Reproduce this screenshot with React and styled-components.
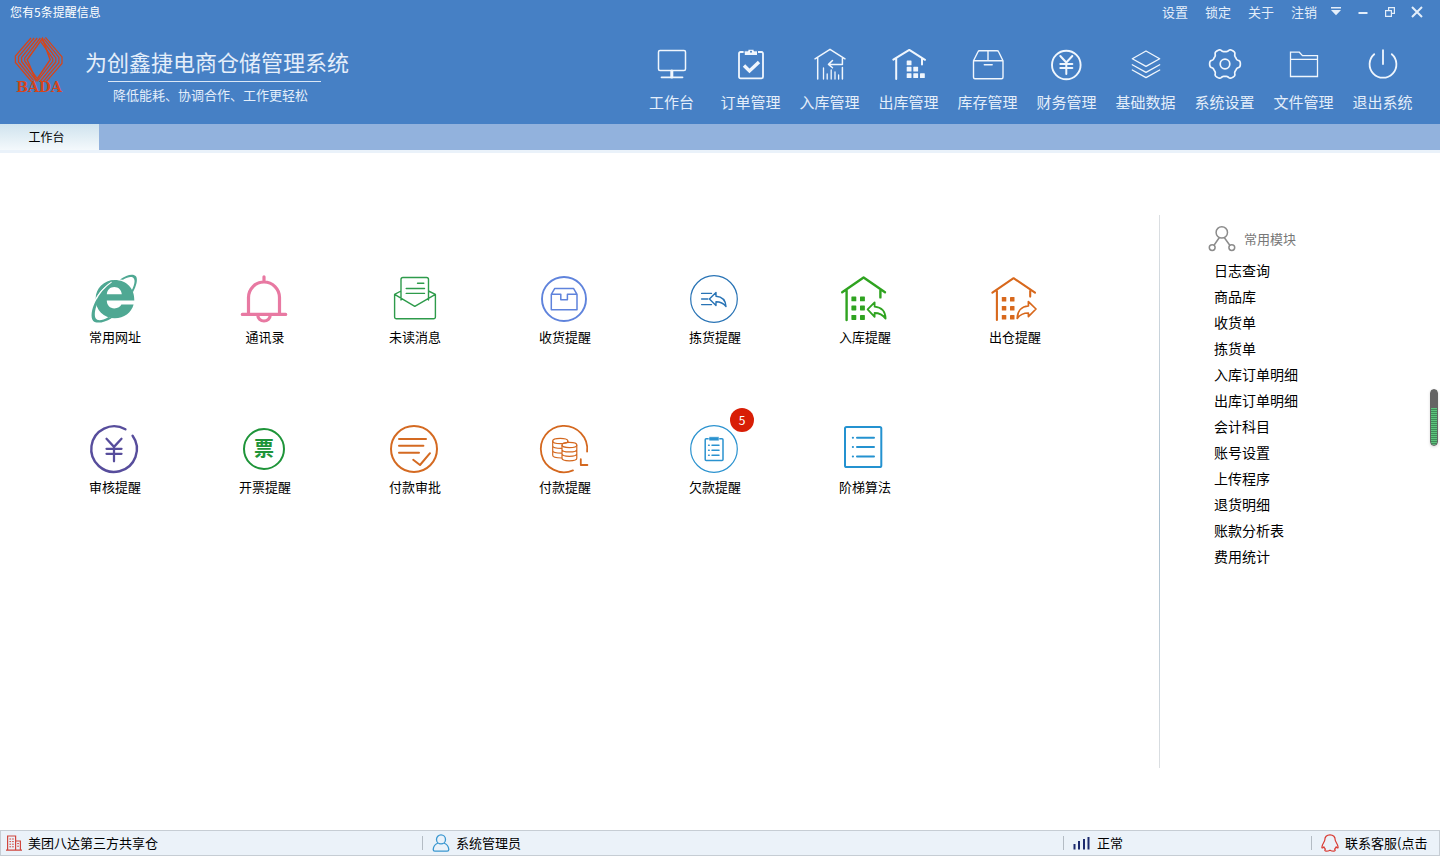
import React, { useState } from "react";
import styled, { createGlobalStyle } from "styled-components";
import { JapaneseYen } from "lucide-react";

const GlobalStyle = createGlobalStyle`
  * { box-sizing: border-box; }
  body {
    margin: 0;
    font-family: "Noto Sans CJK SC", "Liberation Sans", sans-serif;
    font-size: 13px;
    line-height: 20px;
    color: #000;
    background: #fff;
  }
  :where(button) {
    font: inherit;
    color: inherit;
    border: 0;
    padding: 0;
    background: none;
    cursor: pointer;
  }
  a { color: inherit; text-decoration: none; }
  ul { list-style: none; margin: 0; padding: 0; }
  svg { display: block; flex: none; }
`;

// outline of the six-tooth gear, sampled around its centre
const gearPath = () => {
  const pts = [];
  for (let i = 0; i < 180; i++) {
    const t = (i * Math.PI) / 90;
    const r = 13.9 + 1.5 * Math.tanh(2 * Math.cos(6 * t));
    pts.push(`${(18 + r * Math.cos(t)).toFixed(2)} ${(18 + r * Math.sin(t)).toFixed(2)}`);
  }
  return `M${pts.join("L")}Z`;
};

const Squares = ({ cells, size }) =>
  cells.map(([x, y]) => (
    <rect key={`${x}-${y}`} x={x} y={y} width={size} height={size} rx="0.6" fill="currentColor" stroke="none" />
  ));

const navItems = [
  { name: "工作台", icon: (
    <g strokeWidth="1.5">
      <rect x="4.5" y="4.5" width="27" height="20" rx="1.5" />
      <path d="M17.8 25V31" strokeWidth="3" />
      <path d="M7.5 31.3H28.5" strokeWidth="1.8" />
    </g>
  ) },
  { name: "订单管理", icon: (
    <g>
      <rect x="6" y="6" width="24" height="26.3" rx="1.5" strokeWidth="1.8" />
      <path d="M11.5 4.8H15V3.2H21V4.8H24.5V9.5H11.5Z" fill="currentColor" stroke="#4680c5" strokeWidth="1" />
      <circle cx="18" cy="5.8" r="1" fill="#4680c5" stroke="none" />
      <path d="M11 19.5L16.5 25L26 16" strokeWidth="3.4" strokeLinecap="butt" strokeLinejoin="miter" />
    </g>
  ) },
  { name: "入库管理", icon: (
    <g strokeWidth="1.5">
      <path d="M3 12.8L18 3.3L33 12.8M5.7 11.5V33M30.4 12.5V18.5H17M20.5 14.5L16.5 18.4L20.5 21.8M30.4 21.5V33" />
      <path d="M11.5 22V33M15.2 28V33M19.2 24V33M23 26V33M26.6 29V33" strokeWidth="1.3" />
    </g>
  ) },
  { name: "出库管理", icon: (
    <g strokeWidth="2">
      <path d="M2.3 13.6L18.3 3.9L34 13.8M5.2 12V33M31 12V18.5" />
      <Squares size={4.8} cells={[[15.7, 14.5], [15.7, 20.8], [22.3, 20.8], [15.7, 27.2], [22.3, 27.2], [29, 27.2]]} />
    </g>
  ) },
  { name: "库存管理", icon: (
    <g strokeWidth="1.4">
      <path d="M3.5 14.7V31.2a1.5 1.5 0 0 0 1.5 1.5H31.5a1.5 1.5 0 0 0 1.5-1.5V14.7ZM3.5 14.7L8 5.8a1.6 1.6 0 0 1 1.6-1H27a1.6 1.6 0 0 1 1.6 1L33 14.7M18 4.8V14.7M14.3 18.8H22.2" />
    </g>
  ) },
  { name: "财务管理", icon: (
    <g>
      <circle cx="17.3" cy="19" r="14.3" strokeWidth="1.9" />
      <JapaneseYen x="5.3" y="7" size={24} strokeWidth={2} />
    </g>
  ) },
  { name: "基础数据", icon: (
    <g strokeWidth="1.3">
      <path d="M18 5L31.7 12.8L18 20.4L4.3 12.8ZM4.3 18.8L18 26.4L31.7 18.8M4.3 24L18 31.6L31.7 24" />
    </g>
  ) },
  { name: "系统设置", icon: (
    <g strokeWidth="1.7">
      <path d={gearPath()} />
      <circle cx="18" cy="18" r="4.8" />
    </g>
  ) },
  { name: "文件管理", icon: (
    <g strokeWidth="1.3" strokeLinejoin="miter">
      <path d="M4.5 6.2H13.3L16.5 9.6H31.5V30.5H4.5ZM4.5 13.4H31.5" />
    </g>
  ) },
  { name: "退出系统", icon: (
    <g strokeWidth="1.8">
      <path d="M9.2 8.2A13.4 13.4 0 1 0 26.8 8.2M18 4.2V18" />
    </g>
  ) },
];

const tiles = [
  { name: "常用网址", color: "#4fa893", icon: (
    <g stroke="none" fill="currentColor">
      <path fillRule="evenodd" d="M45.3 27.6H17.8C17.8 32.5 21 35.4 25.3 35.4C28.8 35.4 31.4 33.8 32.4 31.6H44.6C42.4 39.8 35 45.3 25.8 45.3C14.6 45.3 6.6 37.2 6.6 26.3C6.6 15.2 15 7 25.8 7C37.4 7 45.8 15.6 45.3 27.6ZM17.8 21.2H32.8C32.4 16.8 29.4 14 25.3 14C21.2 14 18.2 16.8 17.8 21.2Z" />
      <path d="M5.5 29C10 19.5 15.5 13.5 22 9.2" fill="none" stroke="#fff" strokeWidth="1.6" />
      <path d="M31 6.5C38 1.4 44.6 .4 47.1 3.6C49 6.8 47.4 13 43.8 19.5L42.6 17.6C45.4 12 46.4 7.6 44.8 5.4C43 3.3 39 3.8 34 6.8ZM7.8 26C3.6 33 1.3 41.6 3.3 46.4C5.4 51 13.4 50.7 22.6 45.2L19.6 44C13 47.8 8.4 48.2 6.6 45.2C5.2 42.4 5.8 37.2 8 31.6Z" />
      <path d="M7 24C8.5 15.5 15 8.8 24.5 7.2C17 11.5 11.5 17 7 24Z" />
    </g>
  ) },
  { name: "通讯录", color: "#e879a2", icon: (
    <g strokeWidth="3.2">
      <path d="M25 3.8V8M9.5 41V24.5a15.5 15.5 0 0 1 31 0V41M3.3 41.4H46.7M18.8 42.2a6.2 5.8 0 0 0 12.4 0" />
    </g>
  ) },
  { name: "未读消息", color: "#2e9b4b", icon: (
    <g strokeWidth="1.4">
      <path d="M12 27V6.5a2 2 0 0 1 2-2H37.5a2 2 0 0 1 2 2V27M28.5 10.2H34.8M17.2 15.5H35.5M17.2 20.4H35.5M12 18L5.6 21.4V44a1.8 1.8 0 0 0 1.8 1.8H44.6a1.8 1.8 0 0 0 1.8-1.8V21.4L39.5 18M5.6 21.4L25.8 33.4L46.4 21.4" />
    </g>
  ) },
  { name: "收货提醒", color: "#5f83dc", icon: (
    <g strokeWidth="1.9">
      <circle cx="25" cy="26" r="22" />
      <path d="M12.3 21.3V36.8H38V21.3H28.4V26.8H21.8V21.3ZM12.3 21.3L15.8 15.4H34.5L38 21.3" strokeWidth="1.5" />
    </g>
  ) },
  { name: "拣货提醒", color: "#2873b5", icon: (
    <g strokeWidth="1.4">
      <circle cx="25" cy="26" r="23.3" strokeWidth="1.2" />
      <path d="M12.6 20.4H22.5M12.6 26H18.8M12.6 31.6H22.5M20.4 26L27 19.4V23.3C33 23.7 36.6 27.4 37 33.6C34.4 30.2 31.4 28.8 27 28.8V32.6Z" />
    </g>
  ) },
  { name: "入库提醒", color: "#2fa320", icon: (
    <g strokeWidth="2.4">
      <path d="M3.2 19.2L24.6 4.4L46 19.2M7.6 17.5V47M41.4 17.5V24.4" />
      <Squares size={4.9} cells={[[12.4, 23.4], [21, 23.4], [12.4, 32.5], [21, 32.5], [12.4, 42], [21, 42]]} />
      <path d="M28.6 36.4L35.6 29.4V33.6C42.4 34.2 46.4 38.6 46.6 45.6C43.6 41.6 40.4 40 35.6 40V43.8Z" strokeWidth="1.8" />
    </g>
  ) },
  { name: "出仓提醒", color: "#d8681c", icon: (
    <g strokeWidth="2.1">
      <path d="M3.4 19.6L24.6 5.2L46 19.6M7.9 18V47M41.2 18V23.6" />
      <Squares size={4.5} cells={[[12.8, 24], [21, 24], [12.8, 33], [21, 33], [12.8, 42], [21, 42]]} />
      <path d="M47 36L39.4 28.6V33C32.6 33.4 28.4 38 28.2 45.4C31 41.6 34.6 40 39.4 40V43.6Z" strokeWidth="1.7" />
    </g>
  ) },
  { name: "审核提醒", color: "#574d9c", icon: (
    <g strokeWidth="2.4">
      <path d="M36.4 6.3A22.8 22.8 0 1 0 43.6 12.8" />
      <JapaneseYen x="10" y="12" size={30} strokeWidth={1.8} />
    </g>
  ) },
  { name: "开票提醒", color: "#1e9439", icon: (
    <g strokeWidth="2">
      <circle cx="25" cy="26" r="20" />
      <text x="25" y="33" textAnchor="middle" fontSize="20" fontWeight="700" fill="currentColor" stroke="none">票</text>
    </g>
  ) },
  { name: "付款审批", color: "#d46a22", icon: (
    <g strokeWidth="2">
      <circle cx="25" cy="26" r="23" />
      <path d="M10 16H37M10 22.8H34.4M10 29.7H30M24.2 36.8L31 42L41 30.2" />
    </g>
  ) },
  { name: "付款提醒", color: "#d4681f", icon: (
    <g strokeWidth="1.8">
      <path d="M48.1 28.6A23.2 23.2 0 1 0 34 47.4M41.8 36.2V42H48.4" />
      <g strokeWidth="1.2">
        <ellipse cx="21.3" cy="18" rx="7.6" ry="2.7" />
        <path d="M13.7 18V32.3C13.7 33.9 17 35 22.6 35M13.7 22.8C13.7 24.4 17 25.4 22.6 25.4M13.7 27.6C13.7 29.2 17 30.2 22.6 30.2M28.9 18V19.4" />
        <ellipse cx="30.4" cy="22" rx="7.4" ry="2.6" />
        <path d="M23 22V35.3C23 38.7 37.8 38.7 37.8 35.3V22M23 26.4C23 29.8 37.8 29.8 37.8 26.4M23 30.8C23 34.2 37.8 34.2 37.8 30.8" />
      </g>
    </g>
  ) },
  { name: "欠款提醒", color: "#2a92cf", badge: 5, icon: (
    <g strokeWidth="1.5">
      <circle cx="25" cy="26" r="23.3" strokeWidth="1.2" />
      <rect x="16.2" y="15.8" width="17.8" height="21.8" rx="1" />
      <path d="M20.2 13.8H30V17.8H20.2Z" fill="currentColor" stroke="#fff" strokeWidth="0.5" />
      <path d="M19.6 22.2H20.2M23 22.2H30M19.6 27.2H20.2M23 27.2H30M19.6 32.2H20.2M23 32.2H30" />
    </g>
  ) },
  { name: "阶梯算法", color: "#2492d0", icon: (
    <g strokeWidth="2">
      <rect x="6" y="4" width="36.3" height="40" rx="1.6" />
      <path d="M13.8 14.7H14M18 14.7H35M13.8 24H14M18 24H35M13.8 33.4H14M18 33.4H35" />
    </g>
  ) },
];

const modules = [
  "日志查询", "商品库", "收货单", "拣货单", "入库订单明细", "出库订单明细",
  "会计科目", "账号设置", "上传程序", "退货明细", "账款分析表", "费用统计",
];

const Logo = () => (
  <svg width="54" height="60" viewBox="0 0 54 60" fill="none" stroke="#d4451c" strokeWidth="1.3">
    {[0, 180].map((turn) => (
      <g key={turn} transform={`rotate(${turn} 26.7 23.7)`}>
        {[0, 1, 2, 3].map((i) => (
          <path
            key={i}
            d={`M${19 + 3.1 * i} 2L${3.4 + 3.1 * i} ${20 + 0.7 * i}V${26.5 - 0.5 * i}L${20 + 1.6 * i} ${46 - 1.3 * i}`}
          />
        ))}
      </g>
    ))}
    <path d="M30.4 2.4L15.2 23.7L24 44.6L38.2 23.7Z" strokeWidth="1.5" />
    <text x="27" y="56" textAnchor="middle" fontFamily="'DejaVu Serif', serif" fontSize="14" fontWeight="700" fill="#d4451c" stroke="none">BADA</text>
  </svg>
);

const App = () => {
  const [active, setActive] = useState("工作台");

  return (
    <Page>
      <GlobalStyle />
      <Header>
        <TitleBar>
          <Notice>您有5条提醒信息</Notice>
          <TitleActions>
            {["设置", "锁定", "关于", "注销"].map((t) => (
              <button key={t}>{t}</button>
            ))}
            <WindowButtons>
              <button aria-label="菜单">
                <svg width="12" height="12" viewBox="0 0 12 12" fill="currentColor">
                  <path d="M1 1H11V2.6H1ZM1 4H11L6 9.2Z" />
                </svg>
              </button>
              <button aria-label="最小化">
                <svg width="12" height="12" viewBox="0 0 12 12" stroke="currentColor" strokeWidth="2">
                  <path d="M1.5 7H10.5" />
                </svg>
              </button>
              <button aria-label="还原">
                <svg width="12" height="12" viewBox="0 0 12 12" fill="none" stroke="currentColor" strokeWidth="1.2">
                  <path d="M1.6 4.6H7.4V10.4H1.6ZM4.6 4V1.6H10.4V7.4H8" />
                </svg>
              </button>
              <button aria-label="关闭">
                <svg width="12" height="12" viewBox="0 0 12 12" stroke="currentColor" strokeWidth="2">
                  <path d="M1 1L11 11M11 1L1 11" />
                </svg>
              </button>
            </WindowButtons>
          </TitleActions>
        </TitleBar>
        <Banner>
          <Brand>
            <Logo />
            <div>
              <BrandTitle>为创鑫捷电商仓储管理系统</BrandTitle>
              <Slogan>降低能耗、协调合作、工作更轻松</Slogan>
            </div>
          </Brand>
          <Nav>
            {navItems.map((item) => (
              <NavButton key={item.name} onClick={() => setActive(item.name)}>
                <LineIcon width="35" height="36" viewBox="0 0 35 36">{item.icon}</LineIcon>
                {item.name}
              </NavButton>
            ))}
          </Nav>
        </Banner>
      </Header>

      <TabBar>
        <Tab>{active}</Tab>
      </TabBar>

      <Main>
        <TileGrid>
          {tiles.map((tile) => (
            <Tile key={tile.name}>
              <TileIcon $color={tile.color}>
                <LineIcon width="52" height="52" viewBox="0 0 52 52">{tile.icon}</LineIcon>
                {tile.badge && <Badge>{tile.badge}</Badge>}
              </TileIcon>
              {tile.name}
            </Tile>
          ))}
        </TileGrid>
        <Sidebar>
          <SidebarTitle>
            <svg width="28" height="28" viewBox="0 0 28 28" fill="none" stroke="#8c8c8c" strokeWidth="1.5">
              <circle cx="13.8" cy="7.4" r="5.7" />
              <circle cx="4.2" cy="22.6" r="2.9" />
              <circle cx="23.8" cy="22.6" r="2.9" />
              <path d="M11.2 12.8L6 20.2M16.4 12.8L21.8 20.2" />
            </svg>
            常用模块
          </SidebarTitle>
          <ModuleList>
            {modules.map((m) => (
              <li key={m}><a href="#">{m}</a></li>
            ))}
          </ModuleList>
        </Sidebar>
        <Meter />
      </Main>

      <StatusBar>
        <StatusCell $first>
          <svg width="16" height="16" viewBox="0 0 16 16" fill="none" stroke="#d0463e" strokeWidth="1.2">
            <path d="M1.6 15V1H9.6V15M9.6 6H14.4V15M0 15.2H16" />
            <path d="M3.4 4H7.8M3.4 6.6H7.8M3.4 9.2H7.8M3.4 11.8H7.8M11.2 8.6H13M11.2 11.2H13" strokeWidth="1" strokeDasharray="1.7 1" />
          </svg>
          美团八达第三方共享仓
        </StatusCell>
        <StatusCell>
          <svg width="18" height="18" viewBox="0 0 18 18" fill="none" stroke="#3a97d0" strokeWidth="1.3">
            <circle cx="9" cy="5.4" r="4.5" />
            <path d="M6 9C3 10.2 1.4 12.6 1.2 15.6C1.2 16.6 1.8 17.2 2.8 17.2H15.2C16.2 17.2 16.8 16.6 16.8 15.6C16.6 12.6 15 10.2 12 9" />
          </svg>
          系统管理员
        </StatusCell>
        <StatusCell>
          <svg width="18" height="16" viewBox="0 0 18 16" stroke="#1c2a6e" strokeWidth="2">
            <path d="M1.5 14.5V9M6 14.5V6M11 14.5V4M15.5 14.5V2" />
          </svg>
          正常
        </StatusCell>
        <StatusCell>
          <svg width="18" height="18" viewBox="0 0 18 18" fill="none" stroke="#d93a32" strokeWidth="1.2" strokeLinejoin="round">
            <path d="M9 .8C5.6 .8 3.8 3 3.8 6C3.8 7.6 1 10 .9 13.2C.9 14.6 1.8 14 2.8 12.8C3.2 14 3.8 14.6 4.4 15.2C3.2 16 3.8 17.2 5.4 17.2C7 17.2 8 16.8 9 16.2C10 16.8 11 17.2 12.6 17.2C14.2 17.2 14.8 16 13.6 15.2C14.2 14.6 14.8 14 15.2 12.8C16.2 14 17.1 14.6 17.1 13.2C17 10 14.2 7.6 14.2 6C14.2 3 12.4 .8 9 .8Z" />
          </svg>
          联系客服(点击
        </StatusCell>
      </StatusBar>
    </Page>
  );
};

export default App;

const Page = styled.div`
  display: flex;
  flex-direction: column;
  min-height: 100vh;
`;

const Header = styled.header`
  background: #4680c5;
  color: #e4eefa;
`;

const TitleBar = styled.div`
  display: flex;
  justify-content: space-between;
  align-items: center;
  height: 24px;
  padding: 0 17px 0 10px;
`;

const Notice = styled.span`
  font-size: 12px;
  color: #fff;
`;

const TitleActions = styled.div`
  display: flex;
  align-items: center;
  gap: 17px;
`;

const WindowButtons = styled.div`
  display: flex;
  align-items: center;
  gap: 15px;
  margin-left: -4px;
`;

const Banner = styled.div`
  display: flex;
  justify-content: space-between;
  align-items: flex-start;
  height: 100px;
  padding: 0 18px 0 12px;
`;

const Brand = styled.div`
  display: flex;
  gap: 19px;
  padding-top: 12px;
`;

const BrandTitle = styled.h1`
  margin: 9px 0 4px;
  font-size: 22px;
  font-weight: 400;
  line-height: 32px;
  white-space: nowrap;
`;

const Slogan = styled.p`
  margin: 0 28px 0 23px;
  padding: 3px 0 0 5px;
  border-top: 1px solid #dce8f6;
  white-space: nowrap;
`;

const Nav = styled.nav`
  display: flex;
  padding-top: 22px;
`;

const NavButton = styled.button`
  display: flex;
  flex-direction: column;
  align-items: center;
  gap: 10px;
  width: 79px;
  font-size: 15px;
  white-space: nowrap;

  svg { color: #f0f6fd; }
`;

const LineIcon = styled.svg`
  fill: none;
  stroke: currentColor;
  stroke-linecap: round;
  stroke-linejoin: round;
  overflow: visible;
`;

const TabBar = styled.div`
  display: flex;
  height: 29px;
  background: #92b2dd;
  border-bottom: 3px solid #eaf2fa;
`;

const Tab = styled.button`
  min-width: 99px;
  padding-right: 6px;
  font-size: 12px;
  color: #000;
  background: linear-gradient(#cfe3ee, #f4f9fc);
`;

const Main = styled.main`
  position: relative;
  display: flex;
  flex: 1;
`;

const TileGrid = styled.div`
  flex: 1;
  display: grid;
  grid-template-columns: repeat(auto-fill, 150px);
  grid-auto-rows: 150px;
  padding: 120px 0 0 40px;
`;

const Tile = styled.button`
  display: flex;
  flex-direction: column;
  justify-content: flex-start;
  align-items: center;
  gap: 2px;
`;

const TileIcon = styled.span`
  position: relative;
  color: ${(props) => props.$color};
`;

const Badge = styled.span`
  position: absolute;
  top: -15px;
  right: -13px;
  width: 24px;
  height: 24px;
  border-radius: 50%;
  background: #d81e06;
  color: #fff;
  font-size: 12px;
  line-height: 24px;
  text-align: center;
`;

const Sidebar = styled.aside`
  width: 281px;
  margin: 62px 0;
  padding: 10px 0 0 48px;
  border-left: 1px solid;
  border-image: linear-gradient(#dcdfe2, #a9c0d0 55%, #dcdfe2) 1;
`;

const SidebarTitle = styled.h2`
  display: flex;
  align-items: center;
  gap: 8px;
  margin: 0 0 4px;
  font-size: 13px;
  font-weight: 400;
  color: #777;
`;

const ModuleList = styled.ul`
  padding-left: 6px;
  font-size: 14px;
  line-height: 26px;
`;

// small level gauge pinned to the right edge
const Meter = styled.div`
  position: absolute;
  top: 236px;
  right: 2px;
  width: 8px;
  height: 57px;
  border: 1px solid #646464;
  border-radius: 4px;
  background:
    linear-gradient(#646464 18px, transparent 18px),
    repeating-linear-gradient(#5cc47c 0 1px, #3f8a58 1px 2px);
  box-shadow: 0 1px 3px rgba(0, 0, 0, 0.15);
`;

const StatusBar = styled.footer`
  display: grid;
  grid-template-columns: 421px 1fr 248px 128px;
  align-items: center;
  height: 26px;
  background: #ebf2f9;
  border: 1px solid #c6cdd4;
`;

const StatusCell = styled.div`
  display: flex;
  align-items: center;
  gap: 6px;
  height: 14px;
  padding-left: ${(props) => (props.$first ? "5px" : "9px")};
  border-left: ${(props) => (props.$first ? "0" : "1px solid #b4bcc4")};
  white-space: nowrap;
`;
